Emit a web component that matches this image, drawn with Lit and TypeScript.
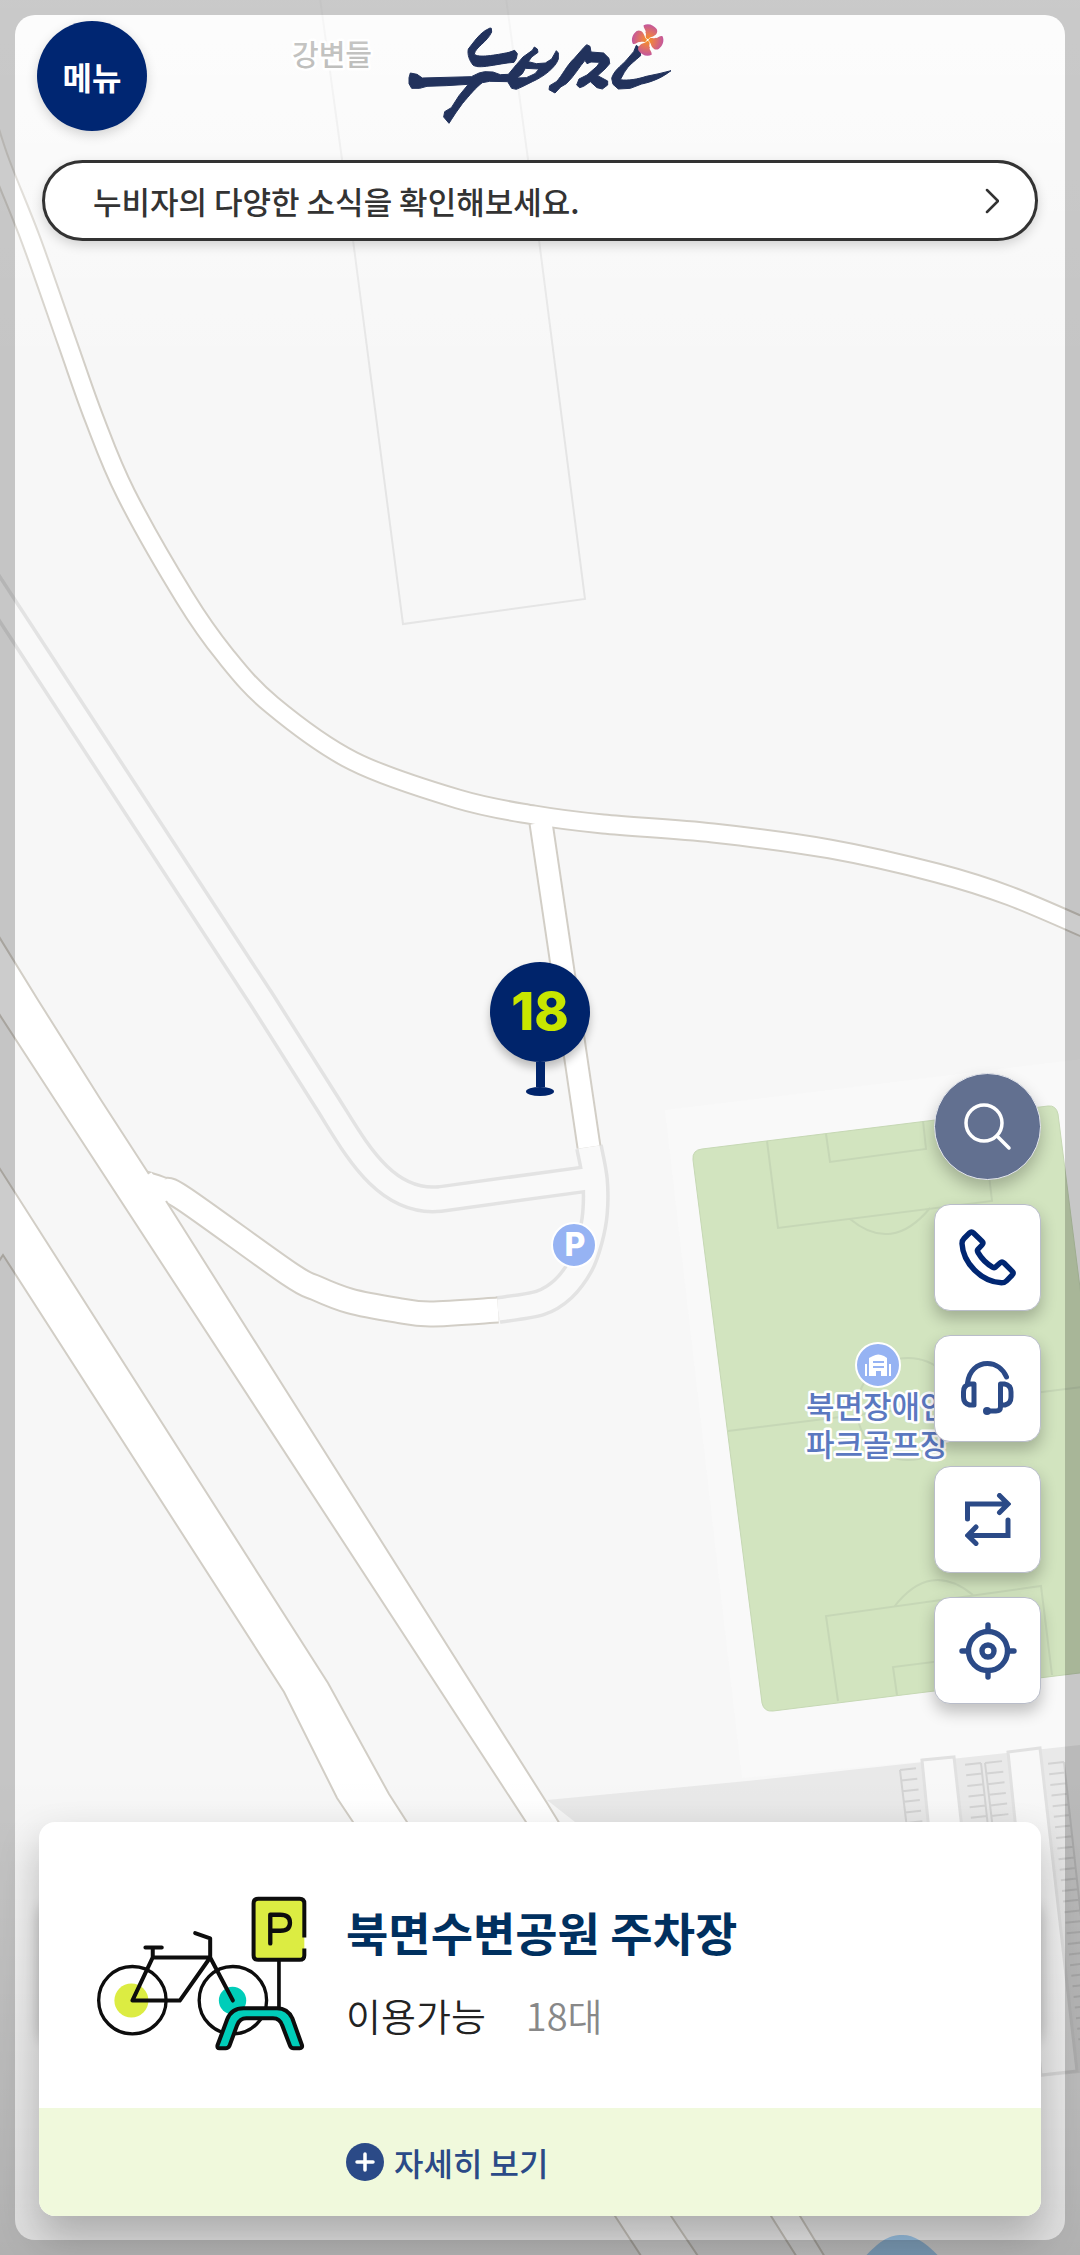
import { LitElement, html, svg, css } from "lit";
import { customElement, property } from "lit/decorators.js";

type Point = [number, number];

/** Smooth open curve through the given points (Catmull-Rom as cubic Béziers). */
function smooth(points: Point[]): string {
  let d = `M${points[0].join(",")}`;
  for (let i = 0; i < points.length - 1; i++) {
    const p0 = points[Math.max(i - 1, 0)];
    const p1 = points[i];
    const p2 = points[i + 1];
    const p3 = points[Math.min(i + 2, points.length - 1)];
    const c1 = [p1[0] + (p2[0] - p0[0]) / 6, p1[1] + (p2[1] - p0[1]) / 6];
    const c2 = [p2[0] - (p3[0] - p1[0]) / 6, p2[1] - (p3[1] - p1[1]) / 6];
    d += `C${c1.join(",")} ${c2.join(",")} ${p2.join(",")}`;
  }
  return d;
}

/** Parking bay marks: a spine with evenly spaced teeth to one side. */
function comb(x: number, y: number, lean: number, count: number, reach: number): string {
  const step = 10.6;
  let d = `M${x},${y}L${x + lean * step * count},${y + step * count}`;
  for (let i = 0; i < count; i++) {
    const tx = x + lean * step * i;
    const ty = y + step * i;
    d += `M${tx},${ty}L${tx + reach},${ty - reach * 0.11}`;
  }
  return d;
}

const MAIN_ROAD = smooth([
  [-16, 112], [0, 162], [31, 240], [67, 342], [94, 418], [126, 494], [185, 598], [225, 655], [272, 705],
  [353, 761], [458, 799], [534, 815], [603, 824], [713, 833], [830, 849], [937, 873], [1010, 896], [1090, 930],
]);
const BRANCH = "M541,823L589,1147";
const PARK_LOOP = smooth([
  [589, 1147], [595, 1180], [595, 1213], [590, 1240], [581, 1265], [563, 1289], [540, 1303], [498, 1310],
]);
const GREY_PATH = "M-14,578L262,1000L324,1098C352,1141 382,1205 440,1199L594,1178";
const SIDE_ROAD = smooth([
  [130, 1180], [145, 1184], [163, 1190], [184, 1199], [288, 1273], [316, 1288], [350, 1301], [396, 1310], [430, 1314], [498, 1310],
]);

@customElement("area-map")
export class AreaMap extends LitElement {
  static styles = css`
    :host { display: block; }
    .map { display: block; width: 100%; height: 100%; background: #f7f7f7; }
    .casing { fill: none; stroke: #d2cec6; }
    .road { fill: none; stroke: #fff; }
    .road-area { fill: #fff; stroke: #d2cec6; stroke-width: 2; }
    .path-casing { fill: none; stroke: #e3e3e3; stroke-width: 28; }
    .path { fill: none; stroke: #f9f9f9; stroke-width: 21; }
    .plot { fill: none; stroke: #e5e5e5; stroke-width: 2; }
    .apron { fill: #f9f9f9; }
    .lot { fill: #e9e9e9; }
    .lane { fill: #f8f8f8; stroke: #e1e1e1; stroke-width: 3; }
    .bays { fill: none; stroke: #d3d3d3; stroke-width: 2; }
    .grass { fill: #d2e4bf; stroke: #c6d8b4; stroke-width: 1; }
    .marking { fill: none; stroke: #c6d7b6; stroke-width: 2; }
    .water { fill: #a3cdf0; }
    .poi { fill: #96b3f3; stroke: #fff; stroke-width: 2; }
    .glyph { fill: #fff; }
    .label {
      font-family: "Noto Sans CJK KR", "Noto Sans", sans-serif;
      font-weight: 500;
      paint-order: stroke;
      stroke: #fff;
      stroke-width: 5;
      stroke-linejoin: round;
    }
    .district { font-size: 29px; fill: #666661; }
    .place { font-size: 31px; fill: #5b78c0; }
    .parking { font: 800 32px Inter, sans-serif; fill: #fff; text-anchor: middle; }
  `;

  render() {
    return html`<svg class="map" viewBox="0 0 1080 2255" preserveAspectRatio="xMidYMid slice" role="img" aria-label="지도">
      <path class="plot" d="M320,-2L353,240L403,624L585,599L539,240L506,-2"></path>
      <path class="apron" d="M665,1110L1090,1058V1746L742,1778Z"></path>
      <path class="lot" d="M547,1800L747,1781L1090,1744V2072L800,2100L575,1822Z"></path>
      <path class="lane" d="M922,1760L954,1757L990,2080L954,2084Z"></path>
      <path class="lane" d="M1008,1752L1040,1748L1077,2071L1041,2075Z"></path>
      ${[
        comb(900, 1770, 0.12, 8, 16),
        comb(981, 1763, 0.11, 8, -16),
        comb(985, 1763, 0.12, 8, 17),
        comb(1064, 1762, 0.11, 27, -16),
      ].map((d) => svg`<path class="bays" d=${d}></path>`)}

      <path class="grass" d="M702,1149L1048,1106Q1056,1105 1058,1114L1128,1667L773,1711Q764,1712 762,1703L693,1160Q692,1150 702,1149Z"></path>
      <path class="marking" d="M767,1141L778,1228L992,1201L982,1116M826,1134L830,1162L926,1149L923,1121M850,1219Q892,1254 930,1208"></path>
      <path class="marking" d="M728,1431L1090,1386M838,1701L826,1616L1041,1586L1052,1675M897,1695L893,1667L988,1655L991,1683M894,1607Q930,1560 973,1595"></path>
      <circle class="marking" cx="908" cy="1409" r="51"></circle>

      <path class="path-casing" d=${GREY_PATH}></path>
      <path class="path-casing" d=${PARK_LOOP}></path>
      <path class="path" d=${GREY_PATH}></path>
      <path class="path" d=${PARK_LOOP}></path>
      <path class="casing" stroke-width="27" d=${SIDE_ROAD}></path>
      <path class="road" stroke-width="23" d=${SIDE_ROAD}></path>
      <path class="road-area" d="M-10,1000L55,1100L526,1822L771,2216L800,2262L828,2262L800,2216L547,1803L168,1204L147,1171L101,1100L38,1000L-10,922Z"></path>
      <path class="road-area" d="M-10,1155L0,1169L328,1683L389,1794L407,1822L671,2216L702,2262L645,2262L615,2216L353,1822L337,1798L284,1692L3,1255L-10,1275Z"></path>
      <path class="road" stroke-width="6" d="M149,1174L166,1201"></path>
      <path class="casing" stroke-width="25" d=${BRANCH}></path>
      <path class="casing" stroke-width="21" d=${MAIN_ROAD}></path>
      <path class="road" stroke-width="21" d=${BRANCH}></path>
      <path class="road" stroke-width="17" d=${MAIN_ROAD}></path>
      <path class="water" d="M850,2275C878,2238 890,2235 903,2235C918,2235 936,2250 954,2275Z"></path>

      <circle class="poi" cx="574" cy="1245" r="22"></circle>
      <text class="parking" x="575" y="1256">P</text>
      <circle class="poi" cx="878" cy="1365" r="22"></circle>
      <path class="glyph" fill-rule="evenodd" d="M869,1376V1358L873,1356Q878,1353 884,1356L887,1358V1376H881V1371H876V1376ZM873,1361V1363H884V1361ZM873,1366V1368H884V1366ZM865,1364H867V1376H865ZM889,1364H891V1376H889Z"></path>
      <text class="label district" x="292" y="66">강변들</text>
      <text class="label place" x="806" y="1418">북면장애인</text>
      <text class="label place" x="806" y="1456">파크골프장</text>
    </svg>`;
  }
}

const LOGO = svg`
  <defs>
    <radialGradient id="petal" gradientUnits="userSpaceOnUse" cx="805" cy="121" r="48">
      <stop offset="0" stop-color="#f7941e"></stop>
      <stop offset="0.45" stop-color="#e5765b"></stop>
      <stop offset="1" stop-color="#c2559f"></stop>
    </radialGradient>
  </defs>
  <g fill="#22325c" stroke="#22325c" stroke-width="3" stroke-linejoin="round">
    <path d="M335,86L336,97C322,128 288,142 284,163C292,176 350,166 388,158L405,152L413,162L410,177L403,188C380,189 350,196 320,200C300,202 288,202 280,196C270,184 262,165 266,148C282,128 296,106 316,93L331,85Z"></path>
    <path d="M92,220L112,224L128,235L275,231L298,220L315,216L340,217L362,225L386,224L410,195L430,172L458,152L464,142L473,148L475,158L456,172L446,186L470,192L497,190L516,178L530,153L536,160L536,178C528,204 490,232 458,246L430,260L410,269L396,266L384,246L330,245L308,249C290,262 270,286 248,312L228,340L215,360L208,371L192,352L195,336L215,324L238,288L266,254L200,258L142,260L120,266L96,266L88,252L88,234ZM437,206L428,222L412,235L440,234L466,222L478,208Z" fill-rule="evenodd"></path>
    <path d="M612,144L621,135L631,140L634,157L672,160L688,176L690,192L676,208L654,228L684,244L684,256L668,268L652,264L632,246L612,260L600,264L591,256L598,238L622,226L652,200L660,188L634,187L622,192L616,182C600,200 582,232 560,252L543,262L526,280L508,270L510,258L530,246C548,228 560,198 584,176Z"></path>
    <path d="M770,137L780,145L783,168C768,182 746,196 734,218L722,240C745,244 775,238 800,230L838,222L874,213C850,232 820,246 786,253L752,266L716,268L700,254L696,236C702,214 722,200 738,184L762,156Z"></path>
  </g>
  ${[0, 90, 180, 270].map(
    (a) => svg`<path fill="url(#petal)" transform="rotate(${a} 804 121)" d="M802,117C794,113 802,104 797,98C802,94 790,86 792,77C806,69 823,77 831,88C837,100 826,109 815,112C810,114 807,116 806,119Z"></path>`,
  )}`;

const BIKE = svg`
  <g fill="none" stroke="#0d0d0d" stroke-width="10" stroke-linecap="round" stroke-linejoin="round">
    <circle cx="216" cy="421" r="51" fill="#dcec42" stroke="none"></circle>
    <circle cx="519" cy="421" r="41" fill="#00cdb9" stroke="none"></circle>
    <circle cx="219" cy="420" r="101"></circle>
    <circle cx="520" cy="420" r="101"></circle>
    <path stroke-width="12" d="M258,262H307M280,264V292M280,292H452L361,421H219L280,292M407,219L452,235V292L520,421"></path>
    <path stroke-width="11" d="M658,300V448"></path>
    <path stroke="none" fill="#dcec42" d="M594,116H720Q734,116 734,130V286Q734,299 720,299H594Q582,299 582,286V130Q582,116 594,116Z"></path>
    <path stroke-width="12" stroke-linecap="butt" d="M734,232V130Q734,116 720,116H596Q582,116 582,130V285Q582,299 596,299H720Q734,299 734,285V265"></path>
    <path stroke-width="13" d="M632,250V164H662Q691,164 691,188Q691,212 662,212H634"></path>
    <path fill="#00cdb9" stroke-width="12" d="M474,555L503,477Q516,444 552,444H652Q684,444 698,474L727,555Q729,563 720,564H702Q694,564 691,556L668,496Q661,474 640,474H560Q541,474 533,494L510,556Q506,564 498,564H480Q472,564 474,555Z"></path>
  </g>`;

const ICONS = {
  search: svg`<svg viewBox="0 0 48 48" width="48" height="48" fill="none" stroke="#fff" stroke-width="3.500" stroke-linecap="round"><circle cx="20" cy="20" r="18"></circle><path d="M33,33L45,45"></path></svg>`,
  phone: svg`<svg viewBox="0 0 57 57" width="57" height="57" fill="none" stroke="#002672" stroke-width="5.400" stroke-linejoin="round"><path d="M10.500 4Q12.500 2 14.500 4L23 12.300Q24.800 14 23 16L18.900 20.300Q17.800 21.500 19 23.500Q24.500 33 33.800 38.300Q35.500 39.200 36.800 37.800L41 34Q43 32.200 45 34L53.300 42.300Q55 44 53.200 46L47.500 51.800Q45.500 53.800 42.500 53.800C22 52.500 4 34 3 14.500Q3 11.500 5 9.500Z"></path></svg>`,
  headset: svg`<svg viewBox="0 0 53 55" width="53" height="55" fill="none" stroke="#2b4a87" stroke-width="5" stroke-linecap="round" stroke-linejoin="round"><path d="M6.500,22C8,10 16,2.500 26.500,2.500C35,2.500 42,8 45.500,16M13,23H9Q2.500,24 2.500,31V36Q2.500,42.500 8.500,44H13ZM39.500,23H43.500Q50,24 50,31V36Q50,42.500 44,44H39.500ZM39.500,44V46Q39.500,50 35,50H27"></path><circle cx="26" cy="50" r="4" fill="#2b4a87" stroke="none"></circle></svg>`,
  swap: svg`<svg viewBox="0 0 46 53" width="46" height="53" fill="none" stroke="#2b4a87" stroke-width="5" stroke-linecap="round"><path d="M2.500,26V11H42M34.500,2.500L43,11L34.500,19.500M43,27V42.500H4M11,34L2.800,42.500L11,50.500"></path></svg>`,
  locate: svg`<svg viewBox="0 0 58 58" width="58" height="58" fill="none" stroke="#2b4a87" stroke-width="5.400" stroke-linecap="round"><circle cx="29" cy="29" r="19.500"></circle><circle cx="29" cy="29" r="6"></circle><path d="M29,3V9M29,49V55M3,29H9M49,29H55"></path></svg>`,
};

const TOOLS: { id: keyof typeof ICONS; label: string }[] = [
  { id: "search", label: "검색" },
  { id: "phone", label: "전화" },
  { id: "headset", label: "고객센터" },
  { id: "swap", label: "새로고침" },
  { id: "locate", label: "현재 위치" },
];

@customElement("map-tools")
export class MapTools extends LitElement {
  static styles = css`
    :host { display: flex; flex-direction: column; gap: 24px; }
    .tool {
      display: grid;
      place-items: center;
      width: 107px;
      height: 107px;
      padding: 0;
      border: 1px solid #b9bdc9;
      border-radius: 16px;
      background: #fff;
      box-shadow: 0 8px 16px rgba(0, 0, 0, 0.24);
      cursor: pointer;
    }
    .search { border-color: #e6e8ee; border-radius: 50%; background: #627090; }
  `;

  render() {
    return TOOLS.map((t) => html`<button class="tool ${t.id}" type="button" aria-label=${t.label}>${ICONS[t.id]}</button>`);
  }
}

@customElement("station-card")
export class StationCard extends LitElement {
  @property() name = "";
  @property({ type: Number }) available = 0;

  static styles = css`
    :host { display: block; position: relative; isolation: isolate; }
    :host::before {
      content: "";
      position: absolute;
      z-index: -1;
      inset: 80px 0 172px;
      border-radius: 16px;
      box-shadow: 0 0 14px rgba(0, 0, 0, 0.2);
    }
    .card {
      overflow: hidden;
      border-radius: 16px;
      background: #fff;
      box-shadow: 0 20px 40px rgba(0, 0, 0, 0.24);
    }
    .summary { display: flex; align-items: center; min-height: 286px; box-sizing: border-box; padding-top: 16px; }
    .picture { flex: none; display: flex; justify-content: center; width: 307px; padding-left: 18px; box-sizing: border-box; }
    .text { display: flex; flex-direction: column; gap: 24px; }
    .name { margin: 0; font-size: 46px; line-height: 60px; font-weight: 700; color: #00305f; }
    .count { display: flex; gap: 40px; margin: 0; font-size: 38px; line-height: 60px; font-weight: 350; color: #222; }
    .number { margin: 0; color: #888; }
    .more {
      display: flex;
      align-items: center;
      gap: 10px;
      width: 100%;
      min-height: 108px;
      padding: 0 0 0 307px;
      border: 0;
      background: #f0f9dc;
      color: #2b4a87;
      font: inherit;
      font-size: 32px;
      font-weight: 500;
      cursor: pointer;
    }
  `;

  render() {
    return html`<article class="card">
      <div class="summary">
        <div class="picture"><svg viewBox="110 105 635 470" width="212" height="157" aria-hidden="true">${BIKE}</svg></div>
        <div class="text">
          <h2 class="name">${this.name}</h2>
          <dl class="count"><dt>이용가능</dt><dd class="number">${this.available}대</dd></dl>
        </div>
      </div>
      <button class="more" type="button">
        <svg viewBox="0 0 38 38" width="38" height="38" aria-hidden="true"><circle cx="19" cy="19" r="19" fill="#2b4a87"></circle><path d="M19,11V27M11,19H27" stroke="#fff" stroke-width="3.500" stroke-linecap="round"></path></svg>
        자세히 보기
      </button>
    </article>`;
  }
}

@customElement("app-root")
export class AppRoot extends LitElement {
  static styles = css`
    :host { display: block; font-family: "Noto Sans CJK KR", "Noto Sans", sans-serif; }
    .screen {
      position: relative;
      isolation: isolate;
      display: flex;
      flex-direction: column;
      min-height: 100vh;
      box-sizing: border-box;
      padding: 21px 0 39px;
      overflow: hidden;
    }
    .backdrop, .fade, .frame { position: absolute; inset: 0; }
    .backdrop { z-index: -3; }
    .fade {
      z-index: -2;
      background:
        linear-gradient(rgba(255, 255, 255, 0.7), rgba(255, 255, 255, 0) 380px),
        linear-gradient(to top, rgba(0, 0, 0, 0.1), rgba(0, 0, 0, 0) 480px);
    }
    .frame {
      z-index: 1;
      inset: 15px;
      border-radius: 20px;
      box-shadow: 0 0 0 60px rgba(0, 0, 0, 0.2);
      pointer-events: none;
    }
    .pin {
      position: absolute;
      left: 50%;
      top: 50%;
      z-index: -1;
      display: flex;
      flex-direction: column;
      align-items: center;
      padding: 0;
      border: 0;
      background: none;
      transform: translate(-50%, -166px);
      cursor: pointer;
    }
    .bubble {
      display: grid;
      place-items: center;
      width: 100px;
      height: 100px;
      border-radius: 50%;
      background: #00246b;
      color: #c8e600;
      font: 800 52px Inter, sans-serif;
      box-shadow: 0 6px 8px rgba(0, 0, 0, 0.24);
    }
    .stem { width: 9px; height: 25px; background: #00246b; }
    .foot { width: 28px; height: 9px; border-radius: 50%; background: #00246b; }
    .header {
      display: grid;
      grid-template-columns: 1fr auto 1fr;
      align-items: start;
      padding: 0 37px;
    }
    .menu {
      width: 110px;
      height: 110px;
      padding: 0;
      border: 0;
      border-radius: 50%;
      background: #002672;
      color: #fff;
      font: inherit;
      font-size: 32px;
      font-weight: 700;
      box-shadow: 0 4px 12px rgba(0, 0, 0, 0.16);
      cursor: pointer;
    }
    .logo { display: block; padding-top: 2px; }
    .notice {
      display: flex;
      align-items: center;
      justify-content: space-between;
      min-height: 81px;
      box-sizing: border-box;
      margin: 29px 42px 0;
      padding: 0 36px 0 48px;
      border: 3px solid #333;
      border-radius: 41px;
      background: #fff;
      color: #333;
      font-size: 31px;
      font-weight: 500;
      line-height: 40px;
      text-decoration: none;
      box-shadow: 0 4px 12px rgba(0, 0, 0, 0.16);
    }
    .tools { align-self: flex-end; margin: auto 39px 118px 0; }
    .station { margin: 0 39px; }
  `;

  render() {
    return html`<main class="screen">
      <area-map class="backdrop"></area-map>
      <div class="fade"></div>
      <button class="pin" type="button">
        <span class="bubble">18</span><span class="stem"></span><span class="foot"></span>
      </button>
      <header class="header">
        <button class="menu" type="button">메뉴</button>
        <svg class="logo" viewBox="85 70 795 306" width="265" height="102" role="img" aria-label="누비자">${LOGO}</svg>
      </header>
      <a class="notice" href="#news">
        누비자의 다양한 소식을 확인해보세요.
        <svg viewBox="0 0 14 26" width="14" height="26" fill="none" stroke="#333" stroke-width="2.500" stroke-linecap="round" stroke-linejoin="round" aria-hidden="true"><path d="M2,2L13,13L2,24"></path></svg>
      </a>
      <map-tools class="tools"></map-tools>
      <station-card class="station" name="북면수변공원 주차장" available="18"></station-card>
      <div class="frame"></div>
    </main>`;
  }
}
